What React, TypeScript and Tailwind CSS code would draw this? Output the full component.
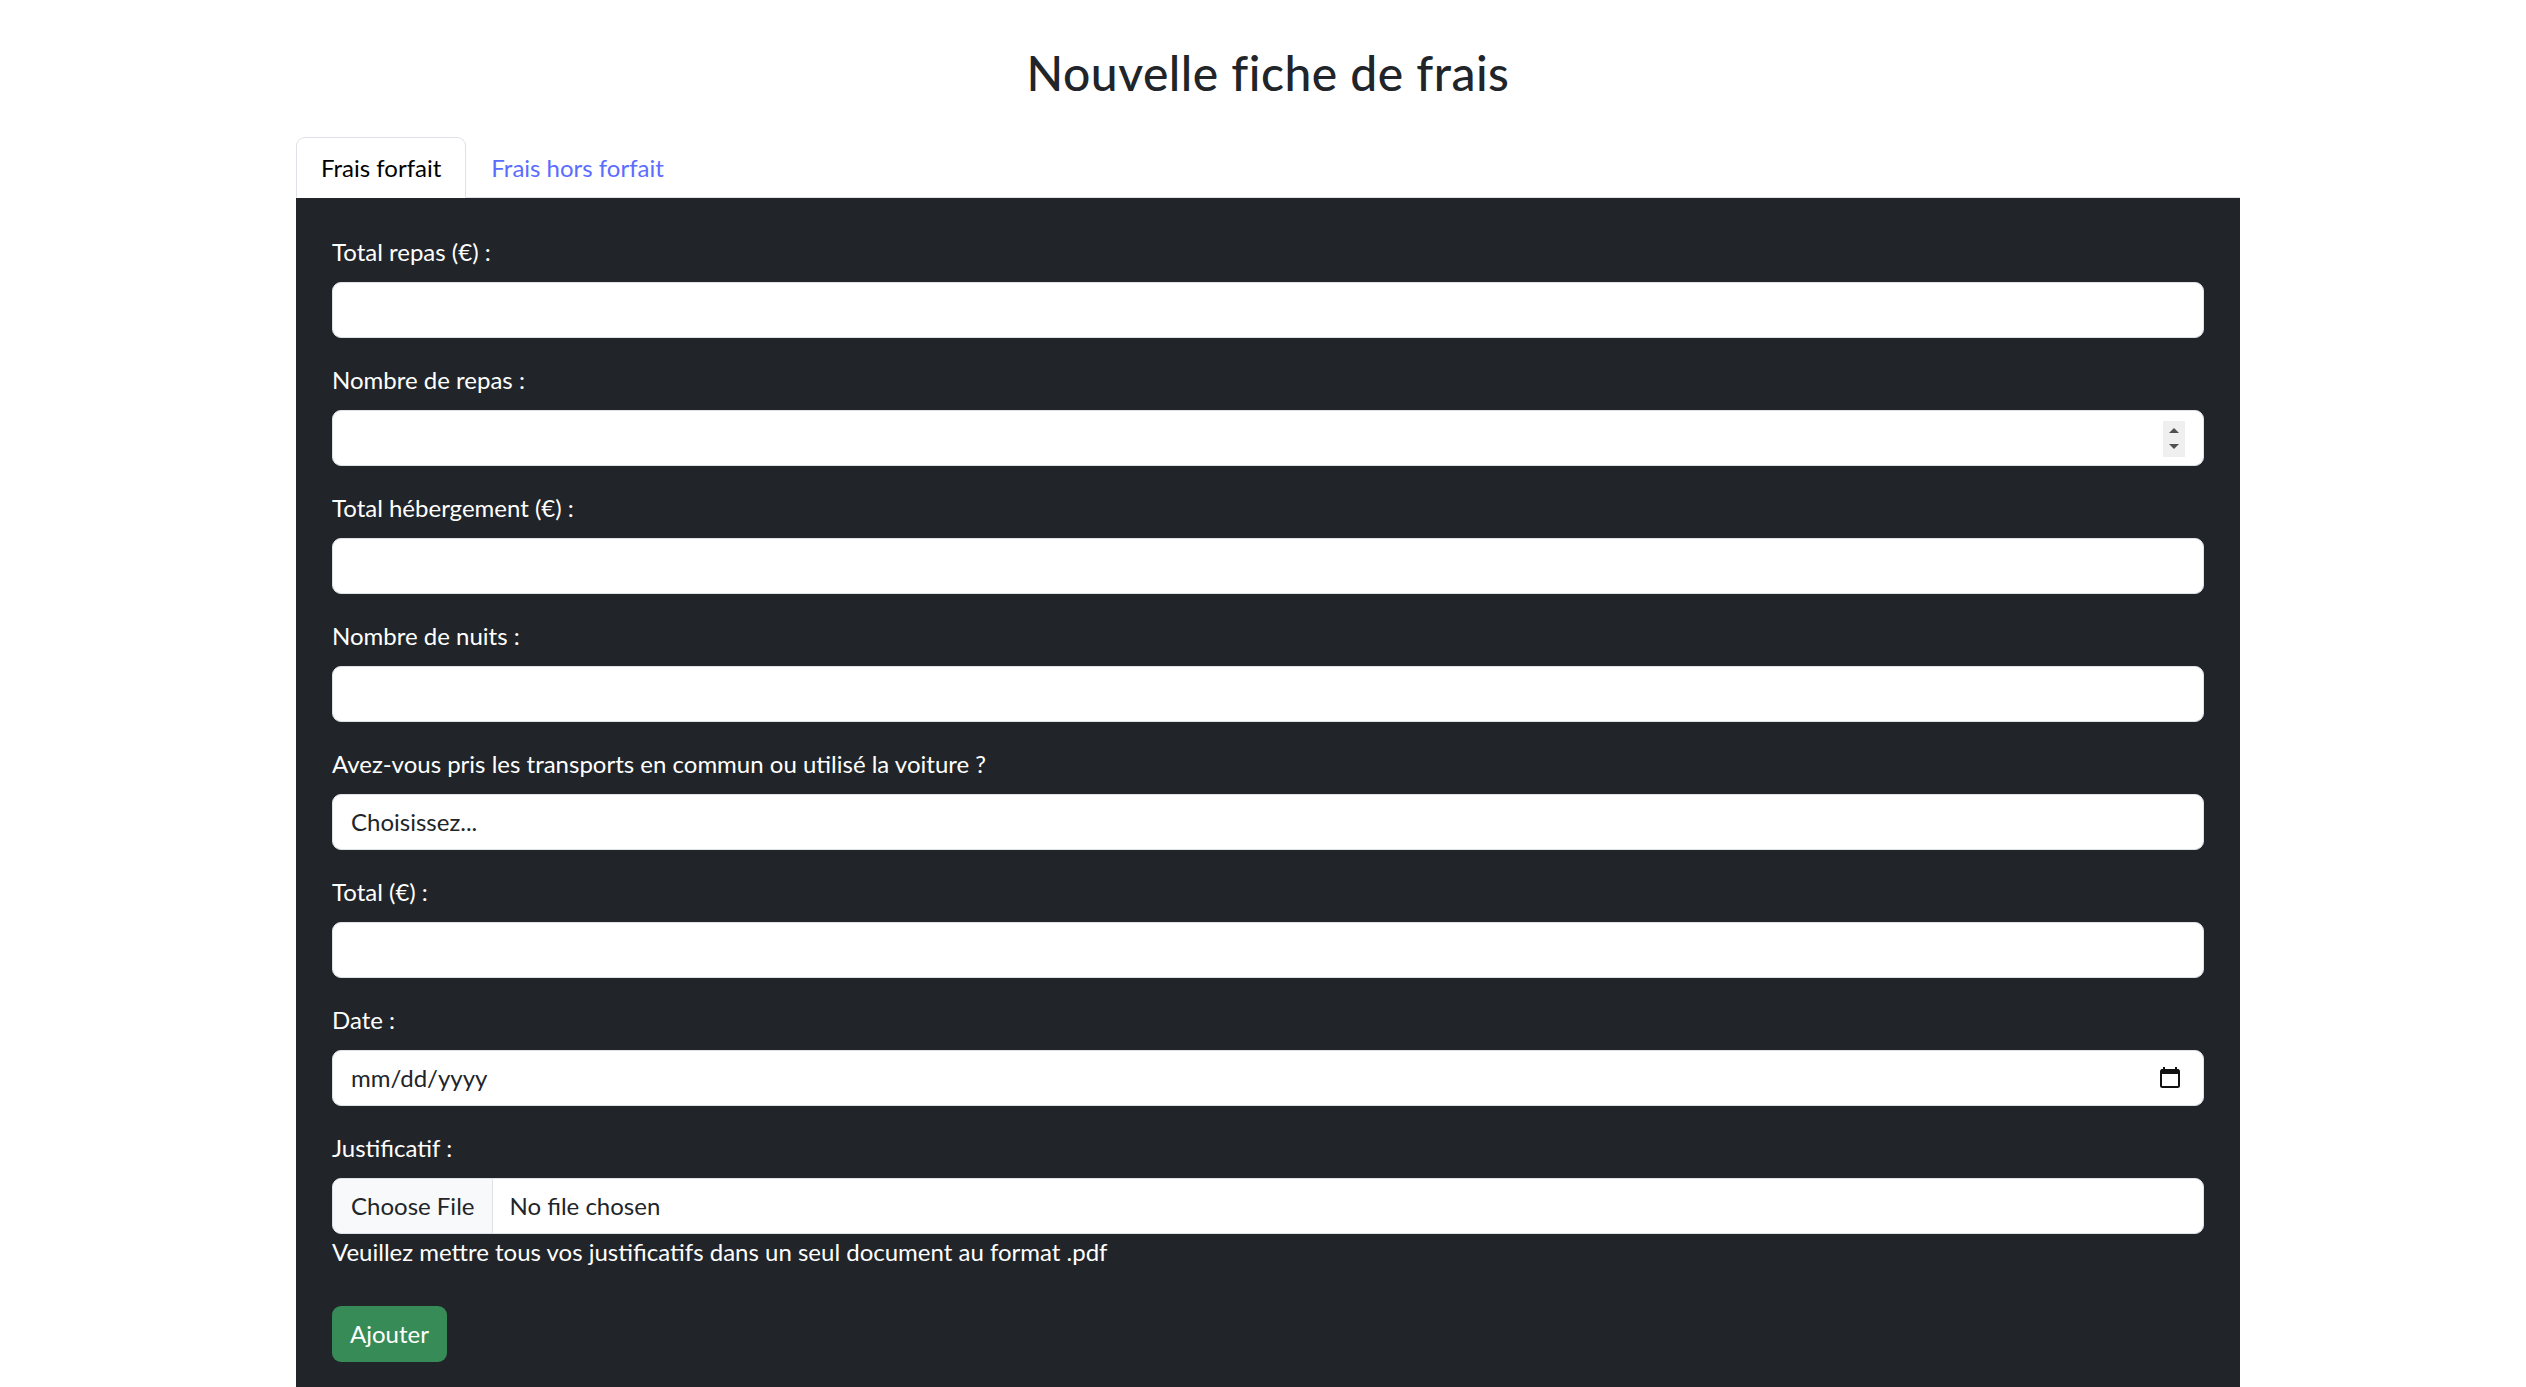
import React from 'react';

const FIELDS_BEFORE_SELECT = [
  { id: 'totalRepas', label: 'Total repas (€) :', kind: 'text' },
  { id: 'nbRepas', label: 'Nombre de repas :', kind: 'number' },
  { id: 'totalHebergement', label: 'Total hébergement (€) :', kind: 'text' },
  { id: 'nbNuits', label: 'Nombre de nuits :', kind: 'text' },
];

const inputBox =
  'relative flex items-center w-full h-[56px] bg-white border border-[#dee2e6] rounded-[9px] px-[18px] text-[24px] text-[#212529]';

function Spinner() {
  return (
    <span className="absolute right-[18px] top-[10px] w-[22px] h-[36px] bg-[#efefef] flex flex-col items-center justify-center gap-[11px]">
      <svg width="10" height="5" viewBox="0 0 10 5">
        <path d="M0 5 L5 0 L10 5 Z" fill="#505050" />
      </svg>
      <svg width="10" height="5" viewBox="0 0 10 5">
        <path d="M0 0 L10 0 L5 5 Z" fill="#505050" />
      </svg>
    </span>
  );
}

function CalendarIcon() {
  return (
    <svg width="20" height="21" viewBox="0 0 20 21" className="absolute right-[23px] top-[16px]">
      <rect x="3" y="0" width="2" height="3" fill="#111" />
      <rect x="15" y="0" width="2" height="3" fill="#111" />
      <rect x="1" y="3" width="18" height="17" rx="1.5" fill="none" stroke="#111" strokeWidth="2" />
      <rect x="1" y="2.5" width="18" height="4.5" fill="#111" />
    </svg>
  );
}

function Field({ label, children }: { label: string; children: React.ReactNode }) {
  return (
    <div className="mb-[24px]">
      <label className="block text-white text-[24px] leading-[36px] mb-[12px]">{label}</label>
      {children}
    </div>
  );
}

export default function App() {
  return (
    <div
      className="min-h-screen bg-white text-[#212529]"
      style={{ fontFamily: '"Lato", "Open Sans", sans-serif' }}
    >
      <div className="flex justify-center pl-[10px]">
        <div className="w-[1944px]">
          {/* Titre */}
          <h2 className="mt-[44px] mb-[35px] text-center text-[48px] leading-[57.6px] font-medium tracking-[0.5px] text-[#212529]">
            Nouvelle fiche de frais
          </h2>

          {/* Onglets */}
          <div className="flex border-b border-[#dee2e6]">
            <button className="-mb-px bg-white border border-[#dee2e6] border-b-white rounded-t-[9px] px-[24px] pt-[12px] pb-[11px] text-[24px] leading-[36px] text-black">
              Frais forfait
            </button>
            <button className="-mb-px border border-transparent px-[24px] pt-[12px] pb-[11px] text-[24px] leading-[36px] text-[#5b6cff]">
              Frais hors forfait
            </button>
          </div>

          {/* Formulaire */}
          <div className="bg-[#212529] rounded-b-[6px] px-[36px] pt-[36px] pb-[200px]">
            {FIELDS_BEFORE_SELECT.map(f => (
              <Field key={f.id} label={f.label}>
                <div className={inputBox}>{f.kind === 'number' && <Spinner />}</div>
              </Field>
            ))}

            <Field label="Avez-vous pris les transports en commun ou utilisé la voiture ?">
              <div className={inputBox}>Choisissez...</div>
            </Field>

            <Field label="Total (€) :">
              <div className={inputBox} />
            </Field>

            <Field label="Date :">
              <div className={inputBox}>
                mm/dd/yyyy
                <CalendarIcon />
              </div>
            </Field>

            <div>
              <label className="block text-white text-[24px] leading-[36px] mb-[12px]">Justificatif :</label>
              <div className="flex items-stretch w-full h-[56px] bg-white border border-[#dee2e6] rounded-[9px] overflow-hidden text-[24px] text-[#212529]">
                <span className="flex items-center bg-[#f8f9fa] border-r border-[#dee2e6] px-[18px]">Choose File</span>
                <span className="flex items-center px-[16px]">No file chosen</span>
              </div>
              <p className="text-white text-[24px] leading-[36px] mb-[36px]">
                Veuillez mettre tous vos justificatifs dans un seul document au format .pdf
              </p>
            </div>

            <button className="h-[56px] px-[18px] rounded-[9px] bg-[#368b56] text-white text-[24px] leading-[36px]">
              Ajouter
            </button>
          </div>
        </div>
      </div>
    </div>
  );
}
